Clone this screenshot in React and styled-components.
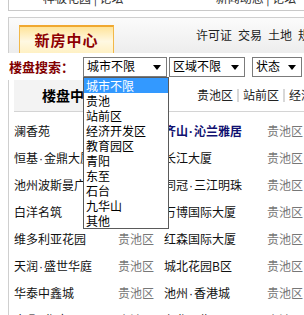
import React from 'react'
import styled, { createGlobalStyle } from 'styled-components'

const GlobalStyle = createGlobalStyle`
  html, body {
    margin: 0;
    padding: 0;
    background: #fff;
    overflow: hidden;
  }
  body {
    font-family: 'Noto Sans CJK SC', 'Noto Sans', sans-serif;
    font-size: 12px;
    color: #000;
  }
`

const cities = ['城市不限', '贵池', '站前区', '经济开发区', '教育园区', '青阳', '东至', '石台', '九华山', '其他']

const rows = [
  ['澜香苑', '贵池区', '齐山·沁兰雅居', '贵池区', true],
  ['恒基·金鼎大厦', '贵池区', '长江大厦', '贵池区'],
  ['池州波斯曼广场', '贵池区', '同冠·三江明珠', '贵池区'],
  ['白洋名筑', '贵池区', '万博国际大厦', '贵池区'],
  ['维多利亚花园', '贵池区', '红森国际大厦', '贵池区'],
  ['天润·盛世华庭', '贵池区', '城北花园B区', '贵池区'],
  ['华泰中鑫城', '贵池区', '池州·香港城', '贵池区'],
  ['金鼎·华府', '贵池区', '九华天街', '贵池区'],
]

const Page = styled.div`
  width: 440px;
  padding-left: 8px;
  line-height: 1.2;
`

const TopStrip = styled.div`
  height: 10px;
  border-left: 1px solid #c9c9c9;
  border-bottom: 1px solid #c9c9c9;
  overflow: hidden;
  display: flex;
  padding-left: 34px;
`

const TopLinks = styled.div`
  margin-top: -8px;
  line-height: 12px;
  color: #333;
  white-space: nowrap;
  & + & {
    margin-left: 92px;
  }
`

const HeaderBox = styled.div`
  margin-top: 6px;
  height: 35px;
  border: 1px solid #cfcfcf;
  border-bottom: none;
  background: linear-gradient(#fbfbfb, #ededed);
  display: flex;
  align-items: center;
`

const Tab = styled.div`
  align-self: flex-end;
  margin-left: 10px;
  width: 93px;
  height: 26px;
  border: 1px solid #f2b848;
  border-top: 2px solid #f0a830;
  border-bottom: none;
  background: linear-gradient(#ffe49a, #fff8e2 55%, #fff1c4);
  color: #8e0000;
  font-size: 15px;
  font-weight: bold;
  display: flex;
  align-items: center;
  justify-content: center;
  letter-spacing: 1px;
`

const Nav = styled.div`
  margin-left: 82px;
  display: flex;
  gap: 6px;
  color: #222;
  white-space: nowrap;
`

const SearchRow = styled.div`
  margin-top: 3px;
  height: 21px;
  display: flex;
  align-items: center;
`

const Label = styled.div`
  width: 74px;
  padding-left: 1px;
  color: #820000;
  font-size: 13px;
  font-weight: bold;
`

const Select = styled.div`
  position: relative;
  box-sizing: border-box;
  width: ${p => p.$w}px;
  margin-left: ${p => p.$gap || 0}px;
  height: 20px;
  border: 1px solid #7b7b7b;
  background: #fff;
  display: flex;
  align-items: center;
  padding-left: 3px;
  font-size: 12px;
  &::after {
    content: '';
    position: absolute;
    right: 5px;
    top: 7px;
    border-left: 4px solid transparent;
    border-right: 4px solid transparent;
    border-top: 5px solid #000;
  }
`

const Options = styled.ul`
  position: absolute;
  z-index: 5;
  top: 19px;
  left: -1px;
  box-sizing: border-box;
  width: 86px;
  margin: 0;
  padding: 0;
  list-style: none;
  background: #fff;
  border: 1px solid #5a5a5a;
`

const Option = styled.li`
  height: 15px;
  line-height: 15px;
  padding-left: 2px;
  background: ${p => (p.$active ? '#3399ff' : '#fff')};
  color: ${p => (p.$active ? '#fff' : '#000')};
`

const Listing = styled.div`
  margin-top: 1px;
  border-left: 1px solid #cfcfcf;
  padding-left: 5px;
`

const ListHead = styled.div`
  margin-top: 3px;
  height: 31px;
  border-bottom: 1px solid #d4d4d4;
  display: flex;
  align-items: center;
`

const HeadTitle = styled.div`
  width: 155px;
  height: 100%;
  box-sizing: border-box;
  padding-left: 28px;
  background: #f3f3f3;
  display: flex;
  align-items: center;
  font-size: 14px;
  font-weight: bold;
`

const Areas = styled.div`
  margin-left: 28px;
  display: flex;
  align-items: center;
  white-space: nowrap;
  color: #222;
`

const Sep = styled.span`
  width: 2px;
  height: 13px;
  margin: 0 4px;
  background: #d8d8d8;
`

const Grid = styled.div`
  margin-top: 6px;
  display: grid;
  grid-template-columns: 104px 46px 103px 60px;
  grid-auto-rows: 27px;
  align-items: center;
`

const Name = styled.div`
  white-space: nowrap;
  color: ${p => (p.$hot ? '#101070' : '#111')};
  font-weight: ${p => (p.$hot ? 'bold' : 'normal')};
`

const Dot = styled.span`
  font-family: 'Liberation Sans', sans-serif;
  margin: 0 1px;
`

const District = styled.div`
  color: #777;
  white-space: nowrap;
`

function EstateName({ text, hot }) {
  const parts = text.split('·')
  return (
    <Name $hot={hot}>
      {parts.map((p, i) => (
        <React.Fragment key={i}>
          {i > 0 && <Dot>·</Dot>}
          {p}
        </React.Fragment>
      ))}
    </Name>
  )
}

export default function App() {
  return (
    <Page>
      <GlobalStyle />
      <TopStrip>
        <TopLinks>样板花园 | 论坛</TopLinks>
        <TopLinks>新闻动态 | 论坛</TopLinks>
      </TopStrip>

      <HeaderBox>
        <Tab>新房中心</Tab>
        <Nav>
          <span>许可证</span>
          <span>交易</span>
          <span>土地</span>
          <span>规划</span>
        </Nav>
      </HeaderBox>

      <SearchRow>
        <Label>楼盘搜索：</Label>
        <Select $w={84}>
          城市不限
          <Options>
            {cities.map((c, i) => (
              <Option key={c} $active={i === 0}>
                {c}
              </Option>
            ))}
          </Options>
        </Select>
        <Select $w={76} $gap={2}>区域不限</Select>
        <Select $w={50} $gap={7}>状态</Select>
      </SearchRow>

      <Listing>
        <ListHead>
          <HeadTitle>楼盘中心</HeadTitle>
          <Areas>
            贵池区<Sep />站前区<Sep />经济开发区<Sep />教育园区
          </Areas>
        </ListHead>
        <Grid>
          {rows.map(([a, da, b, db, hot]) => (
            <React.Fragment key={a}>
              <EstateName text={a} />
              <District>{da}</District>
              <EstateName text={b} hot={hot} />
              <District>{db}</District>
            </React.Fragment>
          ))}
        </Grid>
      </Listing>
    </Page>
  )
}
